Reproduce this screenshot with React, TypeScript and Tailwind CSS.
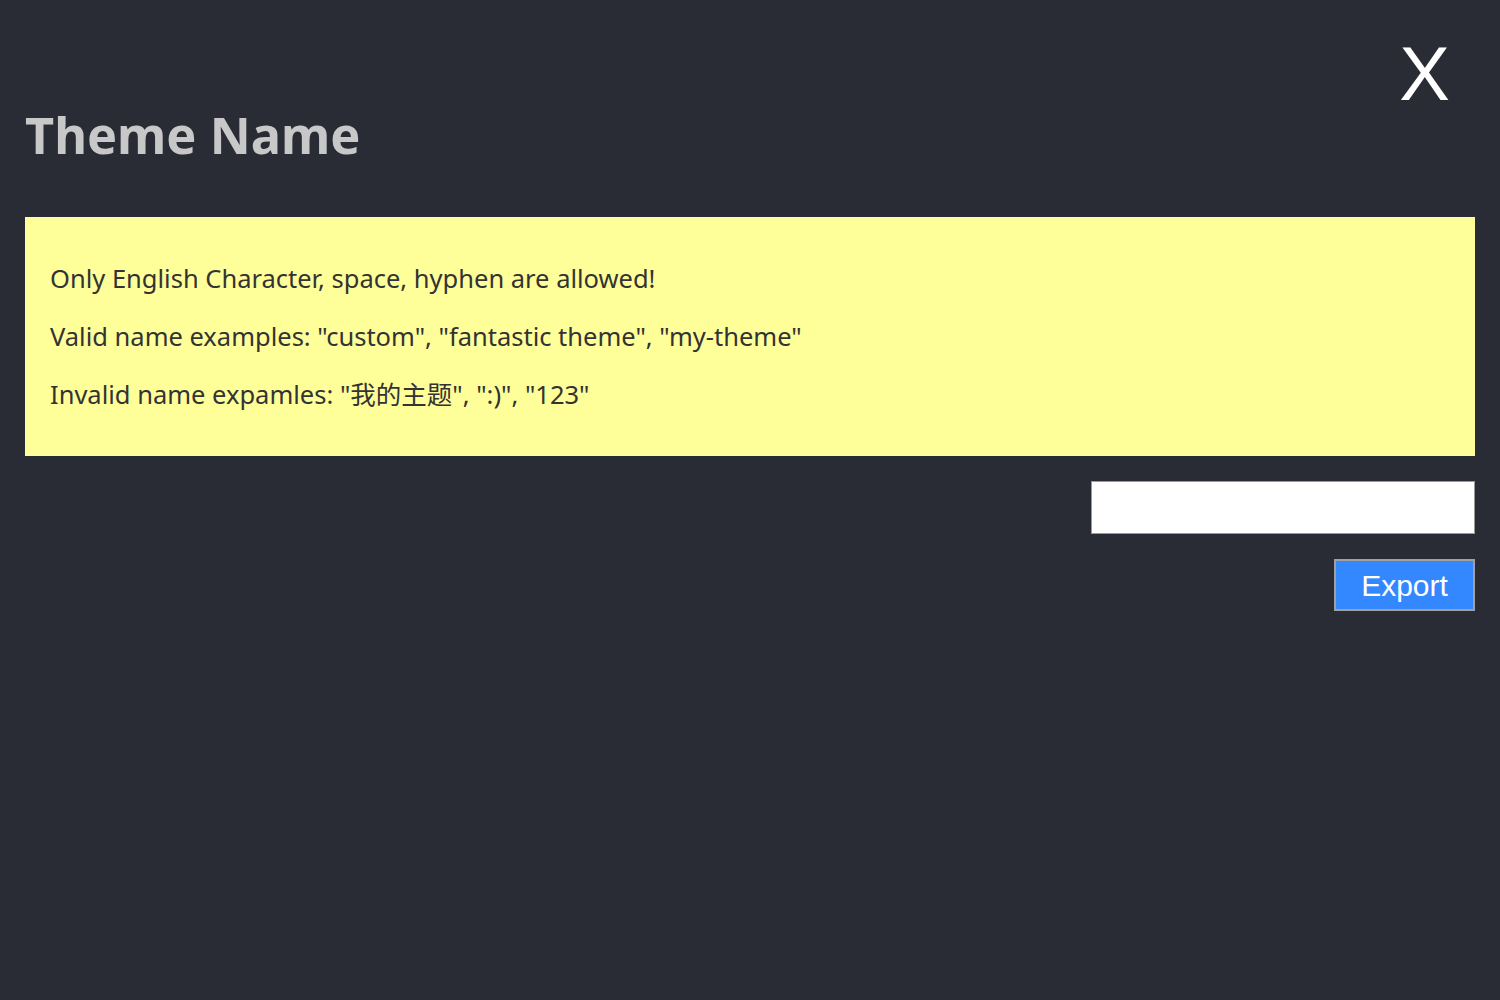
// Theme export dialog: name input with validation hints.
import { useState } from "react";

const hints = [
  "Only English Character, space, hyphen are allowed!",
  'Valid name examples: "custom", "fantastic theme", "my-theme"',
  'Invalid name expamles: "我的主题", ":)", "123"',
];

export default function App() {
  const [name, setName] = useState("");

  return (
    <div className="min-h-screen bg-[#292c35] px-[25px] font-['Noto_Sans','Noto_Sans_CJK_SC',sans-serif]">
      <div className="flex items-start justify-between">
        <h1 className="mt-[100px] text-[50.5px] leading-[70px] font-bold text-[#c8c8c8]">Theme Name</h1>
        <button className="mt-[34px] mr-[25px] font-['Liberation_Sans',sans-serif] text-[76px] leading-[80px] text-white">
          X
        </button>
      </div>

      <div className="mt-[47px] flex flex-col gap-[24px] bg-[#ffff99] px-[25px] pt-[44px] pb-[45px] text-[25.5px] leading-[34px] text-[#333333]">
        {hints.map((hint) => (
          <p key={hint}>{hint}</p>
        ))}
      </div>

      <div className="mt-[25px] flex flex-col items-end gap-[25px]">
        <input
          value={name}
          onChange={(e) => setName(e.target.value)}
          className="h-[53px] w-[384px] border border-[#999999] bg-white px-2 text-[20px] outline-none"
        />
        <button className="h-[52px] w-[141px] border-2 border-[#a0a0a0] bg-[#3388ff] font-['Liberation_Sans',sans-serif] text-[30px] text-white">
          Export
        </button>
      </div>
    </div>
  );
}
